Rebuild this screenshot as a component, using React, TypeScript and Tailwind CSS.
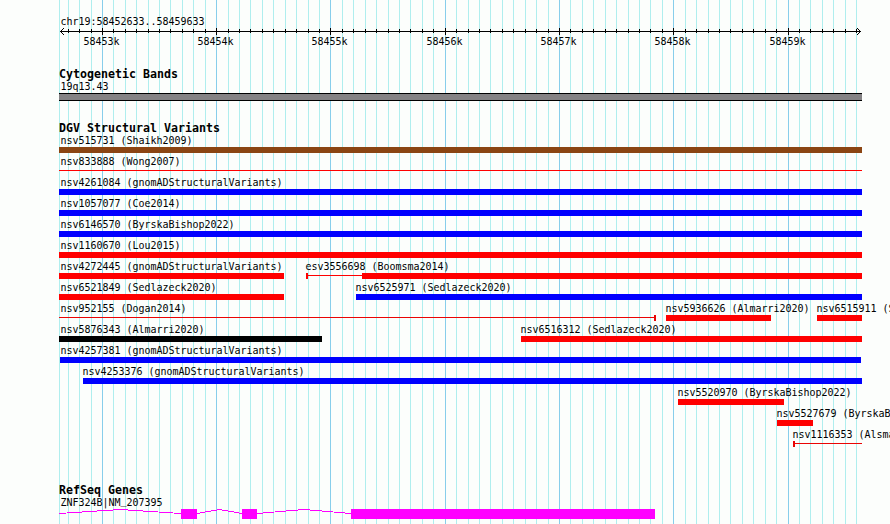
import type { ReactNode } from 'react';

const REGION_START = 58452633;
const REGION_END = 58459633;
const PLOT_LEFT = 59;

const toX = (pos: number) =>
  Math.round(60 + ((pos - REGION_START) * 800) / (REGION_END - REGION_START + 1));

const ticks = Array.from({ length: 70 }, (_, i) => {
  const pos = 58452700 + i * 100;
  return { x: toX(pos), major: pos % 1000 === 0, label: `${pos / 1000}k` };
});

type Glyph = 'bar' | 'line' | 'startTick' | 'endTick' | 'partial';

interface Feature {
  name: string;
  start: number;
  end: number;
  color: string;
  glyph?: Glyph;
  nudge?: number;
}

const RED = 'bg-[#ff0000]';
const DARK_RED = 'bg-[#ea0404]';
const BLUE = 'bg-[#0000ff]';

const lanes: Feature[][] = [
  [{ name: 'nsv515731 (Shaikh2009)', start: 59, end: 862, color: 'bg-[#8b4513]' }],
  [{ name: 'nsv833888 (Wong2007)', start: 59, end: 862, color: RED, glyph: 'line' }],
  [{ name: 'nsv4261084 (gnomADStructuralVariants)', start: 59, end: 862, color: BLUE }],
  [{ name: 'nsv1057077 (Coe2014)', start: 59, end: 862, color: BLUE }],
  [{ name: 'nsv6146570 (ByrskaBishop2022)', start: 59, end: 862, color: BLUE }],
  [{ name: 'nsv1160670 (Lou2015)', start: 59, end: 862, color: RED }],
  [
    { name: 'nsv4272445 (gnomADStructuralVariants)', start: 59, end: 284, color: RED },
    { name: 'esv3556698 (Boomsma2014)', start: 306, end: 862, color: RED, glyph: 'partial', nudge: -0.5 },
  ],
  [
    { name: 'nsv6521849 (Sedlazeck2020)', start: 59, end: 284, color: RED },
    { name: 'nsv6525971 (Sedlazeck2020)', start: 356, end: 862, color: BLUE, nudge: -0.5 },
  ],
  [
    { name: 'nsv952155 (Dogan2014)', start: 59, end: 656, color: DARK_RED, glyph: 'endTick' },
    { name: 'nsv5936626 (Almarri2020)', start: 666, end: 771, color: RED, nudge: -0.5 },
    { name: 'nsv6515911 (Sedlazeck2020)', start: 817, end: 862, color: RED, nudge: -0.5 },
  ],
  [
    { name: 'nsv5876343 (Almarri2020)', start: 59, end: 322, color: 'bg-black' },
    { name: 'nsv6516312 (Sedlazeck2020)', start: 521, end: 862, color: RED, nudge: -0.5 },
  ],
  [{ name: 'nsv4257381 (gnomADStructuralVariants)', start: 60, end: 861, color: BLUE, nudge: 0.4 }],
  [{ name: 'nsv4253376 (gnomADStructuralVariants)', start: 83, end: 862, color: BLUE, nudge: -0.5 }],
  [{ name: 'nsv5520970 (ByrskaBishop2022)', start: 678, end: 784, color: RED, nudge: -0.5 }],
  [{ name: 'nsv5527679 (ByrskaBishop2022)', start: 777, end: 813, color: RED, nudge: -0.5 }],
  [{ name: 'nsv1116353 (Alsmadi2014)', start: 793, end: 862, color: DARK_RED, glyph: 'startTick', nudge: -0.5 }],
];

function Label({ children, nudge = 1.4 }: { children: ReactNode; nudge?: number }) {
  return (
    <div
      className="h-3 origin-[0_9px] scale-y-110 text-[10px] leading-3 tracking-[-0.02px] whitespace-nowrap"
      style={{ marginLeft: nudge }}
    >
      {children}
    </div>
  );
}

function TrackTitle({ children }: { children: ReactNode }) {
  return (
    <h2 className="h-3 text-[11.6px] leading-[10px] font-bold tracking-[0.016px] whitespace-nowrap">
      {children}
    </h2>
  );
}

function FeatureGlyph({ glyph, color }: { glyph: Glyph; color: string }) {
  if (glyph === 'bar') return <div className={`h-1.5 ${color}`} />;
  return (
    <div className="flex h-1.5 items-start">
      {(glyph === 'startTick' || glyph === 'partial') && <div className={`h-1.5 w-0.5 ${color}`} />}
      {glyph === 'partial' ? (
        <>
          <div className={`mt-0.5 h-px w-[54px] ${color}`} />
          <div className={`h-1.5 flex-1 ${color}`} />
        </>
      ) : (
        <div className={`mt-0.5 h-px flex-1 ${color}`} />
      )}
      {glyph === 'endTick' && <div className={`h-1.5 w-0.5 ${color}`} />}
    </div>
  );
}

function Lane({ features }: { features: Feature[] }) {
  return (
    <div className="flex h-[21px]">
      {features.map((f, i) => (
        <div
          key={f.name}
          className="shrink-0"
          style={{
            marginLeft: f.start - (i === 0 ? PLOT_LEFT : features[i - 1].end),
            width: f.end - f.start,
          }}
        >
          <Label nudge={f.nudge}>{f.name}</Label>
          <FeatureGlyph glyph={f.glyph ?? 'bar'} color={f.color} />
        </div>
      ))}
    </div>
  );
}

function GridLines() {
  return (
    <svg className="absolute inset-0" width="890" height="524" shapeRendering="crispEdges">
      <rect x={PLOT_LEFT} y="0" width="1" height="524" fill="#afeeee" />
      {ticks.map((t) => (
        <rect key={t.x} x={t.x} y="0" width="1" height="524" fill={t.major ? '#87ceeb' : '#afeeee'} />
      ))}
    </svg>
  );
}

function Ruler() {
  return (
    <div>
      <svg className="block" width="803" height="8" viewBox="59 28 803 8" shapeRendering="crispEdges">
        <rect x="60" y="31" width="801" height="1" />
        {[1, 2, 3].map((d) => (
          <g key={d}>
            <rect x={60 + d} y={31 - d} width="1" height="1" />
            <rect x={60 + d} y={31 + d} width="1" height="1" />
            <rect x={860 - d} y={31 - d} width="1" height="1" />
            <rect x={860 - d} y={31 + d} width="1" height="1" />
          </g>
        ))}
        {ticks.map((t) => (
          <rect key={t.x} x={t.x} y={t.major ? 28 : 29} width="1" height={t.major ? 7 : 4} />
        ))}
      </svg>
      <div className="flex h-3">
        {ticks
          .filter((t) => t.major)
          .map((t, i, majors) => (
            <div
              key={t.x}
              className="shrink-0"
              style={{
                marginLeft: i === 0 ? t.x - 19 - PLOT_LEFT : t.x - majors[i - 1].x - 36,
                width: 36,
              }}
            >
              <Label nudge={0.4}>{t.label}</Label>
            </div>
          ))}
      </div>
    </div>
  );
}

function Gene() {
  return (
    <svg className="block" width="803" height="10" viewBox="59 509 803 10" shapeRendering="crispEdges">
      <g fill="none" stroke="#ff00ff">
        <polyline points="59,513.5 120.5,509.5 181,513.5" />
        <polyline points="197,513.5 219.5,509.5 242,513.5" />
        <polyline points="257,513.5 304,509.5 351,513.5" />
      </g>
      <g fill="#ff00ff">
        <rect x="181" y="509" width="16" height="10" />
        <rect x="242" y="509" width="15" height="10" />
        <rect x="351" y="509" width="304" height="10" />
      </g>
    </svg>
  );
}

export default function App() {
  return (
    <div className="relative h-[524px] w-[890px] overflow-hidden bg-[#fcfefc] font-['DejaVu_Sans_Mono','Liberation_Mono',monospace] text-black">
      <GridLines />
      <main className="relative flex flex-col pt-4 pl-[59px]">
        <Label>chr19:58452633..58459633</Label>
        <Ruler />
        <section className="mt-[21px]">
          <TrackTitle>Cytogenetic Bands</TrackTitle>
          <Label>19q13.43</Label>
          <div className="h-2 w-[803px] border-y border-black bg-[#848284]" />
        </section>
        <section className="mt-[22px]">
          <TrackTitle>DGV Structural Variants</TrackTitle>
          {lanes.map((features) => (
            <Lane key={features[0].name} features={features} />
          ))}
        </section>
        <section className="mt-[35px]">
          <TrackTitle>RefSeq Genes</TrackTitle>
          <Label>
            ZNF324B|NM<span className="inline-block -translate-y-[2px]">_</span>207395
          </Label>
          <Gene />
        </section>
      </main>
    </div>
  );
}
